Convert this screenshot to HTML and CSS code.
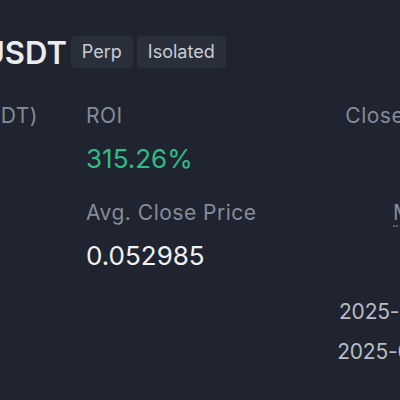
FILE: index.html
```html
<!DOCTYPE html>
<html lang="en">
<head>
    <meta charset="UTF-8">
    <meta name="viewport" content="width=device-width, initial-scale=1.0">
    <title>Position History</title>
    <link rel="stylesheet" href="styles.css">
</head>
<body>
    <div class="page">
        <div class="header">
            <h1 class="symbol">1000PEPEUSDT</h1>
            <span class="tag">Perp</span>
            <span class="tag">Isolated</span>
        </div>
        <div class="stats">
            <div class="stat">
                <span class="stat-label">Closing PNL (USDT)</span>
                <span class="stat-value green">+12.8734</span>
            </div>
            <div class="stat">
                <span class="stat-label">ROI</span>
                <span class="stat-value green">315.26%</span>
            </div>
            <div class="stat right">
                <span class="stat-label">Closed Vol. (USDT)</span>
                <span class="stat-value">1,204.52</span>
            </div>
            <div class="stat">
                <span class="stat-label">Entry Price</span>
                <span class="stat-value">0.048412</span>
            </div>
            <div class="stat">
                <span class="stat-label">Avg. Close Price</span>
                <span class="stat-value">0.052985</span>
            </div>
            <div class="stat right">
                <span class="stat-label"><span class="hint">Max Open Pos.</span></span>
                <span class="stat-value">2,410</span>
            </div>
        </div>
        <div class="times">
            <div class="time-row">
                <span class="time-label">Opened</span>
                <span class="time-value">2025-06-14 08:32:17</span>
            </div>
            <div class="time-row">
                <span class="time-label">Closed</span>
                <span class="time-value">2025-06-14 10:05:43</span>
            </div>
        </div>
    </div>
</body>
</html>
```

FILE: styles.css
```css
body {
    font-family: Inter, "Open Sans", sans-serif;
    margin: 0;
    padding: 0;
    background-color: #1f2430;
    color: #eaecef;
    overflow: hidden;
}
.page {
    width: 716px;
    margin-left: -171px;
    padding-top: 36px;
}
.header {
    display: flex;
    align-items: center;
    gap: 4px;
    height: 32px;
    margin-left: 1px;
}
.symbol {
    font-size: 31px;
    font-weight: 600;
    margin: 0;
    color: #eaecef;
}
.tag {
    display: inline-block;
    background-color: #292f3b;
    color: #c9ccd3;
    font-size: 18px;
    line-height: 32px;
    padding: 0 11px;
    border-radius: 4px;
}
.stats {
    display: grid;
    grid-template-columns: 257px 1fr 1fr;
    row-gap: 22px;
    margin-top: 34px;
}
.stat {
    display: flex;
    flex-direction: column;
}
.stat.right {
    align-items: flex-end;
}
.stat-label {
    font-size: 21px;
    letter-spacing: 0.5px;
    line-height: 28px;
    color: #868c98;
    margin-bottom: 11px;
}
.stat-value {
    font-size: 26px;
    line-height: 36px;
    color: #f0f1f3;
}
.green {
    color: #2ebd85;
}
.hint {
    letter-spacing: 0.1px;
    border-bottom: 2px dotted #5b616d;
}
.times {
    display: flex;
    flex-direction: column;
    gap: 12px;
    margin-top: 24px;
}
.time-row {
    display: flex;
    justify-content: space-between;
    font-size: 21px;
    line-height: 28px;
}
.time-label {
    color: #868c98;
}
.time-value {
    letter-spacing: -0.2px;
    color: #b7bdc6;
}
```
